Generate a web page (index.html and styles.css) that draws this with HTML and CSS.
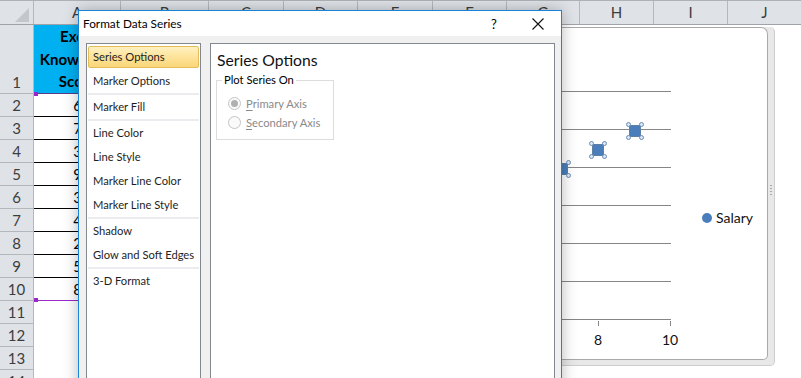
FILE: index.html
```html
<!DOCTYPE html>
<html>
<head>
<meta charset="utf-8">
<link rel="stylesheet" href="styles.css">
</head>
<body>
<div class="sheet">
  <div class="colhead">
    <div class="corner"><svg width="33" height="23" viewBox="0 0 33 23"><polygon points="29,7 29,21 15,21" fill="#c3c7cc"/></svg></div>
    <div>A</div><div>B</div><div>C</div><div>D</div><div>E</div><div>F</div><div>G</div><div>H</div><div>I</div><div>J</div>
  </div>
  <div class="row row1"><div class="rh">1</div><div class="ca head">Excel<br>Knowledge<br>Score</div><div class="rest"></div></div>
  <div class="row"><div class="rh">2</div><div class="ca tb">6</div><div class="rest"></div></div>
  <div class="row"><div class="rh">3</div><div class="ca tb">7</div><div class="rest"></div></div>
  <div class="row"><div class="rh">4</div><div class="ca tb">3</div><div class="rest"></div></div>
  <div class="row"><div class="rh">5</div><div class="ca tb">9</div><div class="rest"></div></div>
  <div class="row"><div class="rh">6</div><div class="ca tb">3</div><div class="rest"></div></div>
  <div class="row"><div class="rh">7</div><div class="ca tb">4</div><div class="rest"></div></div>
  <div class="row"><div class="rh">8</div><div class="ca tb">2</div><div class="rest"></div></div>
  <div class="row"><div class="rh">9</div><div class="ca tb">5</div><div class="rest"></div></div>
  <div class="row"><div class="rh">10</div><div class="ca last">8</div><div class="rest"></div></div>
  <div class="row"><div class="rh">11</div><div class="ca"></div><div class="rest"></div></div>
  <div class="row"><div class="rh">12</div><div class="ca"></div><div class="rest"></div></div>
  <div class="row"><div class="rh">13</div><div class="ca"></div><div class="rest"></div></div>
  <div class="row"><div class="rh">14</div><div class="ca"></div><div class="rest"></div></div>
</div>
<div class="handle h-top"></div>
<div class="handle h-bot"></div>

<div class="chart-frame">
  <div class="chart">
    <div class="plot">
      <div class="gl"></div><div class="gl"></div><div class="gl"></div><div class="gl"></div><div class="gl"></div><div class="gl"></div>
    </div>
    <div class="tick" style="left:218px"></div>
    <div class="tick" style="left:290px"></div>
    <div class="axlbl" style="left:218px">8</div>
    <div class="axlbl" style="left:290px">10</div>
    <div class="marker" style="left:249px;top:97px"><i class="hd tl"></i><i class="hd tr"></i><i class="hd bl"></i><i class="hd br"></i></div>
    <div class="marker" style="left:212px;top:116px"><i class="hd tl"></i><i class="hd tr"></i><i class="hd bl"></i><i class="hd br"></i></div>
    <div class="marker" style="left:176px;top:135px"><i class="hd tl"></i><i class="hd tr"></i><i class="hd bl"></i><i class="hd br"></i></div>
    <div class="legend"><span class="ldot"></span><span>Salary</span></div>
  </div>
  <div class="grip"><i></i><i></i><i></i><i></i></div>
</div>

<div class="dialog">
  <div class="titlebar">
    <span class="title">Format Data Series</span>
    <span class="help">?</span>
    <span class="close"><svg width="12" height="12" viewBox="0 0 12 12"><path d="M0.5 0.5 L11.5 11.5 M11.5 0.5 L0.5 11.5" stroke="#111" stroke-width="1.1" fill="none"/></svg></span>
  </div>
  <div class="dbody">
    <div class="list">
      <div class="item sel">Series Options</div>
      <div class="item">Marker Options</div>
      <div class="sep"></div>
      <div class="item">Marker Fill</div>
      <div class="sep"></div>
      <div class="item">Line Color</div>
      <div class="item">Line Style</div>
      <div class="item">Marker Line Color</div>
      <div class="item">Marker Line Style</div>
      <div class="sep"></div>
      <div class="item">Shadow</div>
      <div class="item">Glow and Soft Edges</div>
      <div class="sep"></div>
      <div class="item">3-D Format</div>
    </div>
    <div class="panel">
      <div class="ph">Series Options</div>
      <fieldset class="group">
        <legend>Plot Series On</legend>
        <div class="radio"><span class="rc on"></span><span class="rl"><u>P</u>rimary Axis</span></div>
        <div class="radio"><span class="rc"></span><span class="rl"><u>S</u>econdary Axis</span></div>
      </fieldset>
    </div>
  </div>
</div>
</body>
</html>
```

FILE: styles.css
```css
body {
  margin: 0;
  width: 801px;
  height: 378px;
  overflow: hidden;
  position: relative;
  background: #fff;
  font-family: Lato, "Liberation Sans", sans-serif;
}

/* ---------- spreadsheet ---------- */
.colhead {
  display: grid;
  grid-template-columns: 34px 87px 88px 75px 74px 75px 74px 73px 74px 74px 74px;
  height: 25px;
  box-sizing: border-box;
  border-top: 1px solid #aeb1b5;
  border-bottom: 1px solid #9fa2a6;
  background: #dfe3e8;
}
.colhead > div {
  border-right: 1px solid #b4b7bb;
  text-align: center;
  font-size: 15px;
  line-height: 23px;
  color: #3d3d3d;
}
.corner svg { display: block; }

.row {
  display: grid;
  grid-template-columns: 34px 87px 1fr;
  height: 23px;
}
.row1 { height: 69px; }
.rh {
  box-sizing: border-box;
  background: #dfe3e8;
  border-right: 1px solid #b4b7bb;
  border-bottom: 1px solid #b4b7bb;
  font-size: 15px;
  color: #3d3d3d;
  line-height: 22px;
  display: flex;
  align-items: flex-end;
  justify-content: center;
}
.ca {
  box-sizing: border-box;
  text-align: center;
  font-size: 15px;
  line-height: 22px;
  color: #000;
  white-space: nowrap;
}
.ca.head {
  background: #00b0f0;
  font-weight: bold;
  line-height: 22.7px;
  display: flex;
  flex-direction: column;
  justify-content: flex-end;
  align-items: center;
  border-bottom: 1px solid #5a3b8c;
}
.ca.tb { border-bottom: 1px solid #000; }
.ca.last { border-bottom: 1px solid #9b27c9; }

.handle {
  position: absolute;
  left: 34px;
  width: 4px;
  height: 4px;
  background: #9b27c9;
}
.h-top { top: 92px; }
.h-bot { top: 298px; }

/* ---------- chart ---------- */
.chart-frame {
  position: absolute;
  left: 380px;
  top: 27px;
  width: 395px;
  height: 339px;
  box-sizing: border-box;
  background: #e8e8e8;
  border-right: 1px solid #cdcdcd;
  border-bottom: 1px solid #cdcdcd;
  border-bottom-right-radius: 5px;
  border-top-right-radius: 5px;
}
.chart {
  position: relative;
  width: 388px;
  height: 333px;
  box-sizing: border-box;
  background: #fff;
  border-top: 1px solid #a9a9a9;
  border-right: 1px solid #a9a9a9;
  border-bottom: 1px solid #a9a9a9;
  border-top-right-radius: 7px;
  border-bottom-right-radius: 5px;
  font-family: Lato, "Liberation Sans", sans-serif;
}
.plot {
  position: absolute;
  left: 20px;
  top: 63px;
  width: 271px;
  border-bottom: 1px solid #868686;
}
.gl {
  height: 37px;
  border-top: 1px solid #868686;
}
.tick {
  position: absolute;
  top: 293px;
  width: 1px;
  height: 5px;
  background: #868686;
}
.axlbl {
  position: absolute;
  top: 303px;
  width: 30px;
  margin-left: -15px;
  text-align: center;
  font-size: 14px;
  line-height: 18px;
  color: #111;
}
.marker {
  position: absolute;
  width: 12px;
  height: 12px;
  box-sizing: border-box;
  background: #4a7ebb;
  border: 1px solid #5d7fa6;
}
.hd {
  position: absolute;
  width: 5px;
  height: 5px;
  box-sizing: border-box;
  border-radius: 50%;
  background: #dce7f4;
  border: 1px solid #6a8db4;
}
.hd.tl { left: -4px; top: -4px; }
.hd.tr { right: -4px; top: -4px; }
.hd.bl { left: -4px; bottom: -4px; }
.hd.br { right: -4px; bottom: -4px; }
.legend {
  position: absolute;
  left: 322px;
  top: 180px;
  display: flex;
  align-items: center;
  gap: 4px;
  font-size: 14px;
  line-height: 20px;
  color: #111;
}
.ldot {
  width: 10px;
  height: 10px;
  border-radius: 50%;
  background: #4a7ebb;
}
.grip {
  position: absolute;
  left: 390px;
  top: 158px;
  display: flex;
  flex-direction: column;
  gap: 2px;
}
.grip i {
  width: 2px;
  height: 1px;
  background: #a8a8a8;
}

/* ---------- dialog ---------- */
.dialog {
  position: absolute;
  left: 78px;
  top: 10px;
  width: 484px;
  height: 420px;
  box-sizing: border-box;
  border: 1px solid #1883d7;
  background: #f0f0f0;
  box-shadow: 0 0 14px rgba(0, 0, 0, 0.28);
  display: flex;
  flex-direction: column;
  font-family: Lato, "Liberation Sans", sans-serif;
  font-size: 11.2px;
  color: #000;
}
.titlebar {
  height: 25px;
  background: #fff;
  display: flex;
  align-items: center;
  padding-left: 4px;
}
.title { flex: 1; font-size: 11.8px; }
.help {
  width: 28px;
  text-align: center;
  font-size: 13px;
  margin-right: 7px;
}
.close {
  width: 46px;
  display: flex;
  justify-content: center;
}
.close svg { display: block; }
.dbody {
  flex: 1;
  display: flex;
  gap: 9px;
  padding: 7px 6px 0 7px;
}
.list {
  width: 115px;
  box-sizing: border-box;
  background: #fff;
  border: 1px solid #828790;
  padding: 1px;
}
.item {
  height: 24px;
  line-height: 24px;
  padding-left: 5px;
  white-space: nowrap;
  color: #1e1e1e;
}
.item.sel {
  height: 22px;
  line-height: 20px;
  margin: 1px 0;
  padding-left: 4px;
  box-sizing: border-box;
  border: 1px solid #e3bd5a;
  border-radius: 2px;
  background: linear-gradient(#fff1c2, #fde39a 50%, #fbd679);
}
.sep {
  height: 2px;
  background: #ebebf0;
}
.panel {
  flex: 1;
  background: #fff;
  border: 1px solid #828790;
  padding: 5px 0 0 5px;
}
.ph {
  font-size: 15.7px;
  line-height: 22px;
  padding-left: 1px;
  color: #111;
}
.group {
  width: 118px;
  box-sizing: border-box;
  margin: 1px 0 0 0;
  padding: 6px 0 7px 11px;
  border: 1px solid #dcdcdc;
}
.group legend {
  padding: 0 2px;
  margin-left: -6px;
  font-size: 11.2px;
  line-height: 16px;
}
.radio {
  height: 19px;
  display: flex;
  align-items: center;
  gap: 5px;
}
.rc {
  width: 13px;
  height: 13px;
  box-sizing: border-box;
  border-radius: 50%;
  border: 1px solid #c4c4c4;
  background: #fafafa;
  display: flex;
  align-items: center;
  justify-content: center;
}
.rc.on::after {
  content: "";
  width: 7px;
  height: 7px;
  border-radius: 50%;
  background: #b0b0b0;
}
.rl { color: #8a8a8a; font-size: 11.2px; }
.rl u { text-decoration-thickness: 1px; text-underline-offset: 2px; }
```
